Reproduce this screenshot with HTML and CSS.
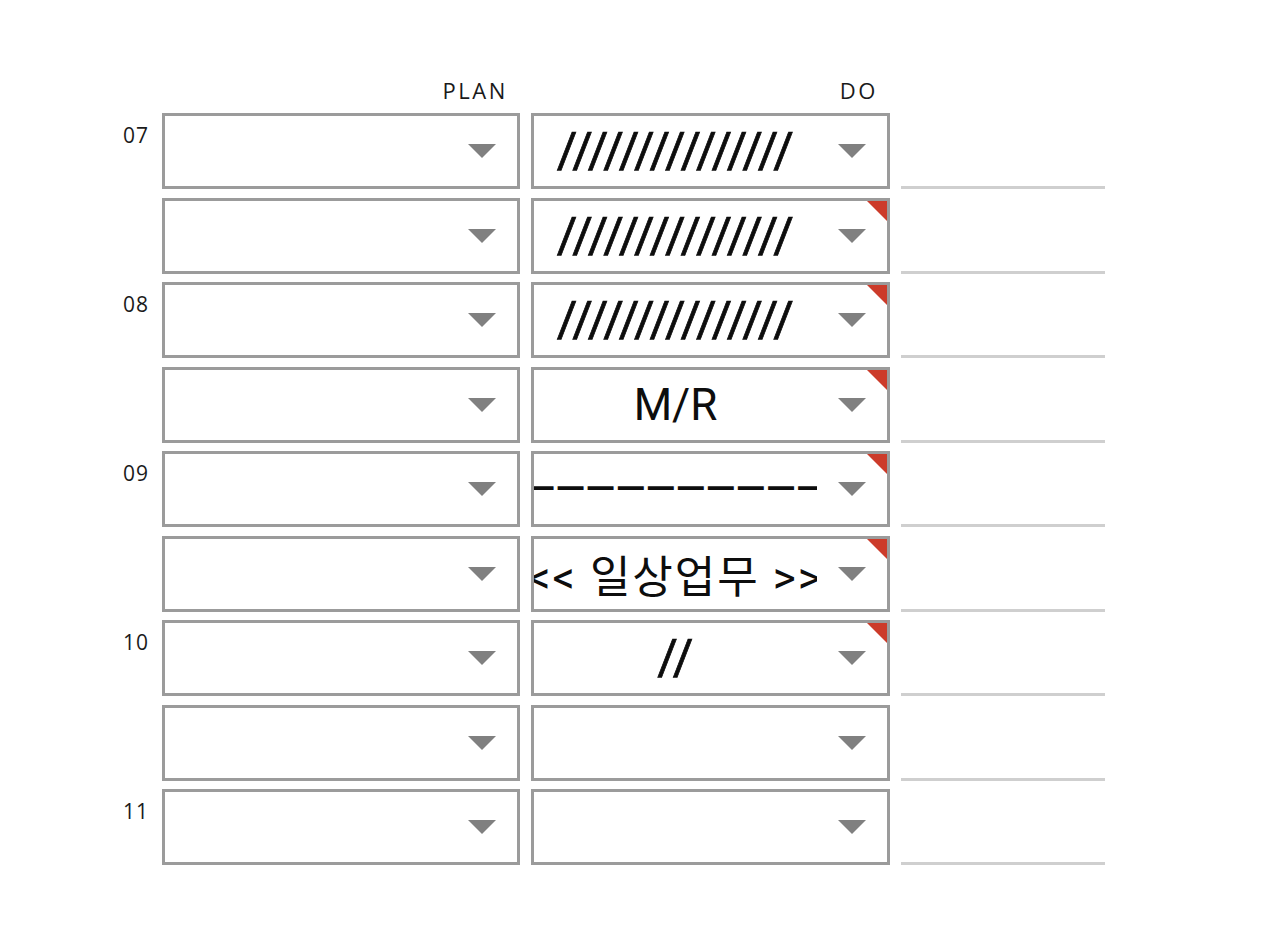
FILE: index.html
```html
<!DOCTYPE html>
<html lang="ko">
<head>
<meta charset="utf-8">
<title>Plan / Do</title>
<link rel="stylesheet" href="styles.css">
</head>
<body>
<div class="planner">
  <div class="head">
    <span class="head-gap"></span>
    <span class="head-title">PLAN</span>
    <span class="head-title">DO</span>
    <span class="head-gap"></span>
  </div>
  <div class="grid">
    <div class="hour">07</div>
    <div class="cell"><div class="val"></div><div class="arrow"></div></div>
    <div class="cell"><div class="val slashes"><span>///////////////</span></div><div class="arrow"></div></div>
    <div class="memo"></div>

    <div class="hour"></div>
    <div class="cell"><div class="val"></div><div class="arrow"></div></div>
    <div class="cell"><div class="val slashes"><span>///////////////</span></div><div class="arrow"></div><span class="flag"></span></div>
    <div class="memo"></div>

    <div class="hour">08</div>
    <div class="cell"><div class="val"></div><div class="arrow"></div></div>
    <div class="cell"><div class="val slashes"><span>///////////////</span></div><div class="arrow"></div><span class="flag"></span></div>
    <div class="memo"></div>

    <div class="hour"></div>
    <div class="cell"><div class="val"></div><div class="arrow"></div></div>
    <div class="cell"><div class="val"><span>M/R</span></div><div class="arrow"></div><span class="flag"></span></div>
    <div class="memo"></div>

    <div class="hour">09</div>
    <div class="cell"><div class="val"></div><div class="arrow"></div></div>
    <div class="cell"><div class="val dashes"><span>——————————————</span></div><div class="arrow"></div><span class="flag"></span></div>
    <div class="memo"></div>

    <div class="hour"></div>
    <div class="cell"><div class="val"></div><div class="arrow"></div></div>
    <div class="cell"><div class="val wide"><span>&lt;&lt; 일상업무 &gt;&gt;</span></div><div class="arrow"></div><span class="flag"></span></div>
    <div class="memo"></div>

    <div class="hour">10</div>
    <div class="cell"><div class="val"></div><div class="arrow"></div></div>
    <div class="cell"><div class="val slashes"><span>//</span></div><div class="arrow"></div><span class="flag"></span></div>
    <div class="memo"></div>

    <div class="hour"></div>
    <div class="cell"><div class="val"></div><div class="arrow"></div></div>
    <div class="cell"><div class="val"></div><div class="arrow"></div></div>
    <div class="memo"></div>

    <div class="hour">11</div>
    <div class="cell"><div class="val"></div><div class="arrow"></div></div>
    <div class="cell"><div class="val"></div><div class="arrow"></div></div>
    <div class="memo"></div>
  </div>
</div>
</body>
</html>
```
FILE: styles.css
```css
html, body {
  margin: 0;
  padding: 0;
  background: #ffffff;
}

.planner {
  padding-top: 78px;
  font-family: "Open Sans", "Noto Sans", sans-serif;
  color: #1a1a1a;
}

.head {
  display: grid;
  grid-template-columns: 151px 358px 359px 204px;
  column-gap: 11px;
  height: 24px;
  margin-bottom: 11px;
}

.head-title {
  font-size: 22px;
  line-height: 24px;
  letter-spacing: 2.6px;
  text-align: right;
  padding-right: 12px;
  font-weight: 400;
}

.grid {
  display: grid;
  grid-template-columns: 151px 358px 359px 204px;
  grid-auto-rows: 76px;
  column-gap: 11px;
  row-gap: 8.5px;
}

.hour {
  align-self: start;
  padding-top: 10px;
  padding-right: 2px;
  text-align: right;
  font-size: 21px;
  line-height: 24px;
  letter-spacing: 1px;
}

.cell {
  position: relative;
  display: flex;
  box-sizing: border-box;
  border: 3px solid #9b9b9b;
  background: #fff;
  overflow: hidden;
}

.val {
  flex: 1;
  min-width: 0;
  display: flex;
  justify-content: center;
  align-items: center;
  overflow: hidden;
  white-space: nowrap;
  font-family: Roboto, "Noto Sans CJK KR", sans-serif;
  font-size: 44px;
  color: #0d0d0d;
}

.val span {
  flex: none;
}

.val.slashes {
  font-size: 50px;
  letter-spacing: 0.3px;
  -webkit-text-stroke: 0.7px #0d0d0d;
}

.val.dashes {
  font-size: 39px;
  font-weight: 500;
  letter-spacing: 0;
}

.val.wide {
  letter-spacing: 2px;
}

.arrow {
  flex: none;
  width: 70px;
  display: flex;
  align-items: center;
  justify-content: center;
}

.arrow::before {
  content: "";
  width: 0;
  height: 0;
  border-left: 14px solid transparent;
  border-right: 14px solid transparent;
  border-top: 14px solid #808080;
}

.flag {
  position: absolute;
  top: 0;
  right: 0;
  width: 0;
  height: 0;
  border-left: 20px solid transparent;
  border-top: 20px solid #cc3b2a;
}

.memo {
  align-self: end;
  height: 3px;
  background: #cfcfcf;
}
```
